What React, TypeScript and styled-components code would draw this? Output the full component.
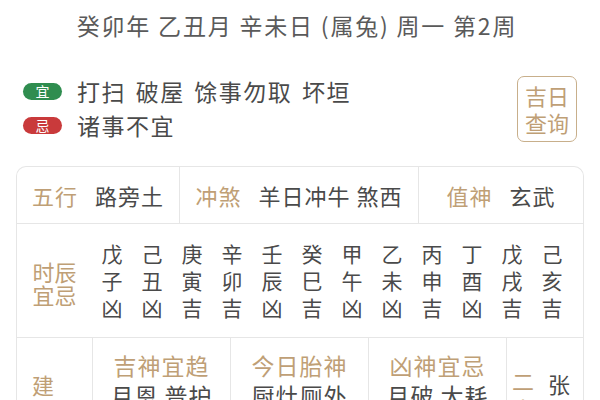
import React from "react";
import styled, { createGlobalStyle } from "styled-components";

const Global = createGlobalStyle`
  html, body { margin: 0; padding: 0; background: #ffffff; }
  body { font-family: "Noto Sans CJK SC", "Noto Sans", sans-serif; overflow: hidden; }
`;

const TAN = "#bf9f76";
const TEXT = "#4a4a4a";
const LINE = "#e6e6e6";

const Page = styled.div`
  width: 600px;
  height: 400px;
  overflow: hidden;
  display: flex;
  flex-direction: column;
`;

const Header = styled.div`
  height: 50px;
  line-height: 50px;
  text-align: center;
  font-size: 23px;
  letter-spacing: 1.8px;
  color: #5a5a5a;
  white-space: pre;
  padding-right: 6px;
`;

const YiJiSection = styled.div`
  display: flex;
  justify-content: space-between;
  align-items: flex-start;
  padding: 26px 23px 24px 23px;
`;

const YiJiList = styled.div`
  display: flex;
  flex-direction: column;
  gap: 4px;
`;

const YiJiRow = styled.div`
  display: flex;
  align-items: center;
  height: 30px;
  gap: 15px;
`;

const Badge = styled.span<{ $tone: "good" | "bad" }>`
  width: 39px;
  height: 17px;
  border-radius: 9px;
  background: ${(p) => (p.$tone === "good" ? "#2f8d4f" : "#c93a3b")};
  color: #ffffff;
  font-size: 14px;
  line-height: 17px;
  text-align: center;
`;

const YiJiText = styled.span`
  font-size: 23px;
  letter-spacing: 1.5px;
  color: ${TEXT};
  white-space: pre;
  word-spacing: 3px;
`;

const QueryButton = styled.div`
  width: 60px;
  height: 66px;
  box-sizing: border-box;
  border: 1.5px solid #c8af8b;
  border-radius: 7px;
  display: flex;
  flex-direction: column;
  align-items: center;
  justify-content: center;
  color: ${TAN};
  font-size: 22px;
  line-height: 27px;
`;

const Table = styled.div`
  margin: 0 16px;
  border: 1px solid ${LINE};
  border-bottom: none;
  border-radius: 10px 10px 0 0;
  display: flex;
  flex-direction: column;
`;

const InfoRow = styled.div`
  display: grid;
  grid-template-columns: 163px 239px 1fr;
  height: 56px;
  border-bottom: 1px solid ${LINE};
`;

const InfoCell = styled.div<{ $divider?: boolean }>`
  display: flex;
  align-items: center;
  justify-content: center;
  gap: 17px;
  font-size: 22px;
  letter-spacing: 1px;
  border-right: ${(p) => (p.$divider ? `1px solid ${LINE}` : "none")};
`;

const Label = styled.span`
  color: ${TAN};
`;

const Value = styled.span`
  color: ${TEXT};
  white-space: pre;
`;

const HourRow = styled.div`
  display: grid;
  grid-template-columns: 75px repeat(12, 40px);
  height: 113px;
  align-items: center;
  border-bottom: 1px solid ${LINE};
`;

const HourLabel = styled.div`
  color: ${TAN};
  font-size: 22px;
  line-height: 23px;
  text-align: center;
  padding-top: 4px;
`;

const HourCol = styled.div`
  display: flex;
  flex-direction: column;
  align-items: center;
  font-size: 21px;
  line-height: 27px;
  color: ${TEXT};
`;

const GodRow = styled.div`
  display: grid;
  grid-template-columns: 76px 138px 138px 138px 1fr;
  height: 90px;
`;

const GodCell = styled.div<{ $divider?: boolean }>`
  display: flex;
  flex-direction: column;
  align-items: center;
  padding-top: 14px;
  gap: 4px;
  font-size: 23px;
  letter-spacing: 1px;
  line-height: 26px;
  border-right: ${(p) => (p.$divider ? `1px solid ${LINE}` : "none")};
`;

const SideCell = styled.div<{ $divider?: boolean; $top: number; $pad: number }>`
  display: flex;
  gap: 14px;
  padding: ${(p) => p.$top}px 0 0 ${(p) => p.$pad}px;
  font-size: 22px;
  line-height: 28px;
  border-right: ${(p) => (p.$divider ? `1px solid ${LINE}` : "none")};
`;

const VerticalText = styled.div<{ $tan?: boolean; $shift?: number }>`
  display: flex;
  flex-direction: column;
  padding-top: ${(p) => p.$shift ?? 0}px;
  color: ${(p) => (p.$tan ? TAN : TEXT)};
`;

const hours = [
  ["戊", "子", "凶"],
  ["己", "丑", "凶"],
  ["庚", "寅", "吉"],
  ["辛", "卯", "吉"],
  ["壬", "辰", "凶"],
  ["癸", "巳", "吉"],
  ["甲", "午", "凶"],
  ["乙", "未", "凶"],
  ["丙", "申", "吉"],
  ["丁", "酉", "凶"],
  ["戊", "戌", "吉"],
  ["己", "亥", "吉"],
];

const gods = [
  { title: "吉神宜趋", value: "月恩 普护" },
  { title: "今日胎神", value: "厨灶厕外" },
  { title: "凶神宜忌", value: "月破 大耗" },
];

export default function App() {
  return (
    <Page>
      <Global />
      <Header>癸卯年 乙丑月 辛未日 (属兔) 周一 第2周</Header>
      <YiJiSection>
        <YiJiList>
          <YiJiRow>
            <Badge $tone="good">宜</Badge>
            <YiJiText>打扫 破屋 馀事勿取 坏垣</YiJiText>
          </YiJiRow>
          <YiJiRow>
            <Badge $tone="bad">忌</Badge>
            <YiJiText>诸事不宜</YiJiText>
          </YiJiRow>
        </YiJiList>
        <QueryButton>
          <span>吉日</span>
          <span>查询</span>
        </QueryButton>
      </YiJiSection>
      <Table>
        <InfoRow>
          <InfoCell $divider>
            <Label>五行</Label>
            <Value>路旁土</Value>
          </InfoCell>
          <InfoCell $divider>
            <Label>冲煞</Label>
            <Value>羊日冲牛 煞西</Value>
          </InfoCell>
          <InfoCell>
            <Label>值神</Label>
            <Value>玄武</Value>
          </InfoCell>
        </InfoRow>
        <HourRow>
          <HourLabel>
            时辰
            <br />
            宜忌
          </HourLabel>
          {hours.map((h, i) => (
            <HourCol key={i}>
              {h.map((c, j) => (
                <span key={j}>{c}</span>
              ))}
            </HourCol>
          ))}
        </HourRow>
        <GodRow>
          <SideCell $divider $top={32} $pad={15}>
            <VerticalText $tan>
              <span>建</span>
              <span>除</span>
            </VerticalText>
          </SideCell>
          {gods.map((g, i) => (
            <GodCell key={i} $divider>
              <Label>{g.title}</Label>
              <Value>{g.value}</Value>
            </GodCell>
          ))}
          <SideCell $top={28} $pad={5}>
            <VerticalText $tan>
              <span>二</span>
              <span>十</span>
            </VerticalText>
            <VerticalText $shift={3}>
              <span>张</span>
            </VerticalText>
          </SideCell>
        </GodRow>
      </Table>
    </Page>
  );
}
